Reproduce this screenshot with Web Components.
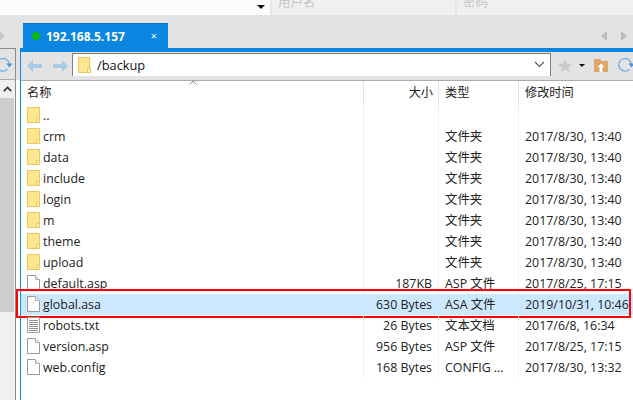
<!DOCTYPE html>
<html lang="zh"><head><meta charset="utf-8"><title>SFTP</title>
<style>
html,body{margin:0;padding:0;height:400px;overflow:hidden;background:#e3e3e3;font-family:"Open Sans","Noto Sans CJK SC",sans-serif;}
</style></head><body>
<ftp-app></ftp-app>
<script>
const FOLDER='<svg width="13" height="16" viewBox="0 0 13 16"><path d="M.5.5h12v15H.5z" fill="#ffe792" stroke="#ecc95c"/><path d="M9.5 15.5v-4h3" fill="#fff3c4" stroke="#ecc95c"/></svg>';
const FILE='<svg width="13" height="16" viewBox="0 0 13 16"><path d="M.5.5h8l4 4v11H.5z" fill="#fff" stroke="#9a9a9a"/><path d="M8.5.5v4h4" fill="#eee" stroke="#b0b0b0"/></svg>';
const TEXT='<svg width="13" height="16" viewBox="0 0 13 16"><path d="M.5.5h12v15H.5z" fill="#fff" stroke="#a0a0a0"/><path d="M2 3.5h9M2 5.5h9M2 7.5h9M2 9.5h9M2 11.5h9M2 13.5h9" stroke="#8f8f8f"/></svg>';
const ICONS={folder:FOLDER,file:FILE,text:TEXT};
const REFRESH='<svg width="18" height="16" viewBox="0 0 18 16"><path d="M12.5 12.300A6.300 6.300 0 1 1 14.300 7" fill="none" stroke="#7fb5e6" stroke-width="1.500"/><path d="M11.300 6.500h6l-3 4z" fill="#4b98dd"/></svg>';

customElements.define('top-bar',class extends HTMLElement{constructor(){super();this.attachShadow({mode:'open'}).innerHTML=`<style>
:host{display:flex;height:15px;background:#f0f0f0;overflow:hidden;font-size:12.5px;color:#c6c6c6}
.host{width:270px;background:#fcfcfc;display:flex;justify-content:flex-end;align-items:center;box-sizing:border-box;padding-right:5px}
.caret{width:0;height:0;border:4px solid transparent;border-top:4px solid #111;border-bottom:0;margin-top:-2px}
.f{box-sizing:border-box;border-left:2px solid #e6e6e6;line-height:15px;padding-left:6px;white-space:nowrap}
.u{width:185px}.p{flex:1}
.t{display:block;margin-top:-7px;line-height:20px}
</style><div class="host"><span class="caret"></span></div><div class="f u"><span class="t">用户名</span></div><div class="f p"><span class="t">密码</span></div>`}});

customElements.define('tab-strip',class extends HTMLElement{constructor(){super();this.attachShadow({mode:'open'}).innerHTML=`<style>
:host{display:flex;height:33px;background:#e3e3e3;box-sizing:border-box;padding-top:8px;align-items:stretch;position:relative}
.prev{width:23px;display:flex;align-items:center}
.tab{width:145px;background:#0a85e0;border-top:1px solid #0878cc;box-sizing:border-box;display:flex;align-items:center;color:#fff;font-weight:700;font-size:12px;padding-left:9px}
.dot{width:8px;height:8px;border-radius:50%;background:#0fb90f;margin-right:6px;flex:none}
.x{margin-left:auto;margin-right:11px;font-weight:400;font-size:11px;line-height:12px}
.nav{margin-left:auto;display:flex;gap:14px;align-items:center;padding-right:6px}
svg{display:block}
</style><div class="prev"><svg width="5" height="10" viewBox="0 0 5 10"><path d="M0 0l5 5-5 5z" fill="#c8c8c8"/></svg></div>
<div class="tab"><span class="dot"></span><span>192.168.5.157</span><span class="x">×</span></div>
<div class="nav"><svg width="6" height="10" viewBox="0 0 6 10"><path d="M6 0L0 5l6 5z" fill="#bdbdbd"/></svg><svg width="6" height="10" viewBox="0 0 6 10"><path d="M0 0l6 5-6 5z" fill="#bdbdbd"/></svg></div>`}});

customElements.define('side-pane',class extends HTMLElement{constructor(){super();this.attachShadow({mode:'open'}).innerHTML=`<style>
:host{display:flex;flex-direction:column;width:16px;height:100%;box-sizing:border-box;border-right:1px solid #8c8c8c;border-top:1px solid #8c8c8c;overflow:hidden;background:#f0f0f0}
.tool{height:31px;background:#e3e3e3;border-bottom:1px solid #ababab;box-sizing:border-box;position:relative;overflow:hidden;flex:none}
.tool svg{display:block;margin:8px 0 0 -5px}
.up{height:18px;flex:none;display:flex;align-items:center;justify-content:center;background:#f0f0f0;width:14px}
.thumb{height:214px;background:#cdcdcd;flex:none;width:14px}
</style><div class="tool">${REFRESH}</div>
<div class="up"><svg width="9" height="6" viewBox="0 0 9 6"><path d="M.8 5.200l3.700-3.700 3.700 3.700" fill="none" stroke="#333" stroke-width="1.700"/></svg></div><div class="thumb"></div>`}});

customElements.define('path-bar',class extends HTMLElement{constructor(){super();this.attachShadow({mode:'open'}).innerHTML=`<style>
:host{display:flex;height:28px;background:#e3e3e3;align-items:flex-start;box-sizing:border-box;position:relative;font-size:12.8px}
.nav{display:flex;gap:11px;width:51px;padding:8px 0 0 6px;box-sizing:border-box;flex:none}
svg{display:block;flex:none}
.box{width:479px;height:23px;flex:none;box-sizing:border-box;border:1px solid #7f7f7f;border-bottom:0;background:#fff;display:flex;align-items:center;padding:0 5px 1px 5px;margin-top:1px;color:#111}
.box .p{margin-left:6px;flex:1}
.tools{display:flex;align-items:center;padding:5px 0 0 7px;overflow:hidden;flex:1;min-width:0}
.caret{width:0;height:0;border:3px solid transparent;border-top:3px solid #111;border-bottom:0;margin:0 9px 0 7px;flex:none}
.tools svg:last-child{margin-left:9px}
</style>
<div class="nav"><svg width="15" height="12" viewBox="0 0 15 12"><path d="M6 0v4h9v4H6v4L0 6z" fill="#a6cbe9"/></svg><svg width="15" height="12" viewBox="0 0 15 12"><path d="M9 0v4H0v4h9v4l6-6z" fill="#a6cbe9"/></svg></div>
<div class="box"><svg width="13" height="16" viewBox="0 0 13 16"><path d="M.5.500h11v15H.5z" fill="#ffe792" stroke="#ecc95c"/><path d="M9.500 15.500v-4h3v4z" fill="#fff3c4" stroke="#ecc95c"/></svg><span class="p">/backup</span><svg width="11" height="7" viewBox="0 0 11 7"><path d="M1 1l4.500 4.500L10 1" fill="none" stroke="#555" stroke-width="1.100"/></svg></div>
<div class="tools"><svg width="14" height="13" viewBox="0 0 14 13"><path d="M7 0l2.100 4.600 4.900.5-3.700 3.300 1.100 4.600L7 10.600 2.600 13l1.100-4.600L0 5.100l4.900-.5z" fill="#c9c9c9"/></svg><span class="caret"></span><svg width="14" height="13" viewBox="0 0 14 13"><path d="M0 0h6l1.500 2H14v11H0z" fill="#dba66b"/><path d="M7 4.500l3.500 3.500H8.500v5h-3V8h-2z" fill="#fff"/></svg>${REFRESH}</div>`}});

const GRID='display:grid;grid-template-columns:343px 75px 80px 1fr;';
customElements.define('list-header',class extends HTMLElement{constructor(){super();this.attachShadow({mode:'open'}).innerHTML=`<style>
:host{${GRID}height:25px;box-sizing:border-box;background:#fff;border-top:1px solid #ababab;font-size:12.2px;color:#222;position:relative}
div{box-sizing:border-box;border-right:1px solid #e5e5e5;line-height:23px;height:24px;white-space:nowrap}
.n{padding-left:6px}.s{text-align:right;padding-right:5px}.t{padding-left:6px}.d{padding-left:6px;border:0}
.sort{position:absolute;left:168px;top:-1px;}
</style><div class="n">名称</div><div class="s">大小</div><div class="t">类型</div><div class="d">修改时间</div>
<svg class="sort" width="8" height="5" viewBox="0 0 8 5"><path d="M.5 4.500L4 1l3.500 3.500" fill="none" stroke="#888"/></svg>`}});

customElements.define('file-row',class extends HTMLElement{
connectedCallback(){const a=k=>this.getAttribute(k)||'';const sel=this.hasAttribute('selected');
this.attachShadow({mode:'open'}).innerHTML=`<style>
:host{${GRID}height:21px;font-size:12.4px;color:#222;line-height:21px;white-space:nowrap;position:relative;${sel?'background:#cce8ff;':''}}
div{box-sizing:border-box;height:21px;overflow:visible}
.rule{border-right:1px solid ${sel?'#cce8ff':'#f0f0f0'}}
.n{display:flex;align-items:center;padding-left:6px;gap:3px;}.s{text-align:right;padding-right:6px}.t{padding-left:6px}.d{padding-left:6px}
svg{display:block;flex:none;margin-top:-1px}
.mark{position:absolute;left:-5px;right:2px;top:-5px;height:29px;border:2px solid #f00;box-sizing:border-box;pointer-events:none}
</style><div class="n rule">${ICONS[a('icon')]}<span>${a('name')}</span></div><div class="s rule">${a('size')}</div><div class="t rule">${a('type')}</div><div class="d">${a('date')}</div>${sel?'<span class="mark"></span>':''}`}});

customElements.define('file-list',class extends HTMLElement{constructor(){super();this.attachShadow({mode:'open'}).innerHTML=`<style>
:host{display:block;background:#fff;flex:1}
.rows{display:block}
</style><list-header></list-header><div class="rows"><slot></slot></div>`}});

customElements.define('main-panel',class extends HTMLElement{constructor(){super();this.attachShadow({mode:'open'}).innerHTML=`<style>
:host{display:flex;flex-direction:column;flex:1;min-width:0;border-left:1px solid #0a85e0;border-top:4px solid #0a85e0;height:100%;box-sizing:border-box;background:#fff}
</style><path-bar></path-bar><file-list><slot></slot></file-list>`}});

customElements.define('ftp-app',class extends HTMLElement{constructor(){super();this.attachShadow({mode:'open'}).innerHTML=`<style>
:host{display:block;width:633px;height:400px;overflow:hidden;background:#e3e3e3}
.body{display:flex;height:352px;background:#e3e3e3}
.gap{width:4px;flex:none;background:#fff;display:flex;flex-direction:column}
.gap div{height:32px;background:#e3e3e3}
</style><top-bar></top-bar><tab-strip></tab-strip>
<div class="body"><side-pane></side-pane><div class="gap"><div></div></div><main-panel><slot></slot></main-panel></div>`}});

const rows=[
['folder','..','','',''],
['folder','crm','','文件夹','2017/8/30, 13:40'],
['folder','data','','文件夹','2017/8/30, 13:40'],
['folder','include','','文件夹','2017/8/30, 13:40'],
['folder','login','','文件夹','2017/8/30, 13:40'],
['folder','m','','文件夹','2017/8/30, 13:40'],
['folder','theme','','文件夹','2017/8/30, 13:40'],
['folder','upload','','文件夹','2017/8/30, 13:40'],
['file','default.asp','187KB','ASP 文件','2017/8/25, 17:15'],
['file','global.asa','630 Bytes','ASA 文件','2019/10/31, 10:46',1],
['text','robots.txt','26 Bytes','文本文档','2017/6/8, 16:34'],
['file','version.asp','956 Bytes','ASP 文件','2017/8/25, 17:15'],
['file','web.config','168 Bytes','CONFIG ...','2017/8/30, 13:32']];
const app=document.querySelector('ftp-app');
for(const r of rows){const e=document.createElement('file-row');
['icon','name','size','type','date'].forEach((k,i)=>e.setAttribute(k,r[i]));
if(r[5])e.setAttribute('selected','');app.appendChild(e);}
</script></body></html>
